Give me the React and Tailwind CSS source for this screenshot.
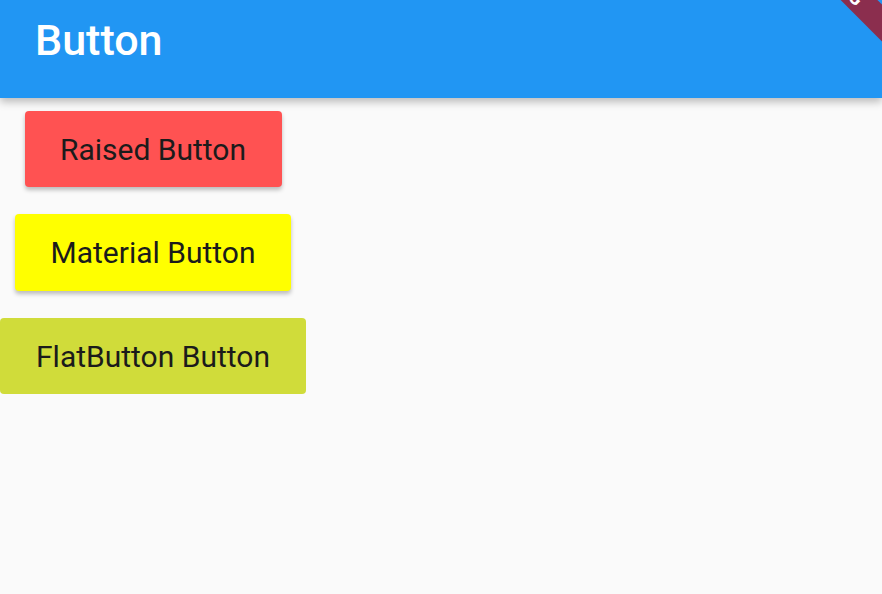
export default function App() {
  return (
    <div
      className="relative w-[882px] h-[594px] overflow-hidden bg-[#fafafa]"
      style={{ fontFamily: "Roboto, 'Liberation Sans', sans-serif" }}
    >
      {/* App bar */}
      <div className="relative z-10 h-[98px] bg-[#2196f3] flex items-center pl-[35px] shadow-[0_4px_8px_rgba(0,0,0,0.25)]">
        <h1 className="text-[43px] font-medium text-white leading-none -mt-[18px]">Button</h1>
      </div>

      {/* Debug banner */}
      <div className="absolute z-20 left-[709px] top-[-33px] w-[260px] h-[26px] bg-[#8b2e4e] rotate-45 flex items-center justify-center">
        <span className="text-[19px] font-bold text-white leading-none tracking-wide">DEBUG</span>
      </div>

      {/* Buttons */}
      <div className="w-[306px] flex flex-col items-center pt-[13px] gap-[27px]">
        <button className="w-[257px] h-[76px] rounded-[4px] bg-[#ff5252] text-[30px] text-[#1b1b1b] shadow-[0_3px_4px_rgba(0,0,0,0.25)]">
          Raised Button
        </button>
        <button className="w-[276px] h-[77px] rounded-[4px] bg-[#ffff00] text-[30px] text-[#1b1b1b] shadow-[0_3px_4px_rgba(0,0,0,0.25)]">
          Material Button
        </button>
        <button className="w-[306px] h-[76px] rounded-[4px] bg-[#d0dc3a] text-[30px] text-[#1b1b1b]">
          FlatButton Button
        </button>
      </div>
    </div>
  );
}
